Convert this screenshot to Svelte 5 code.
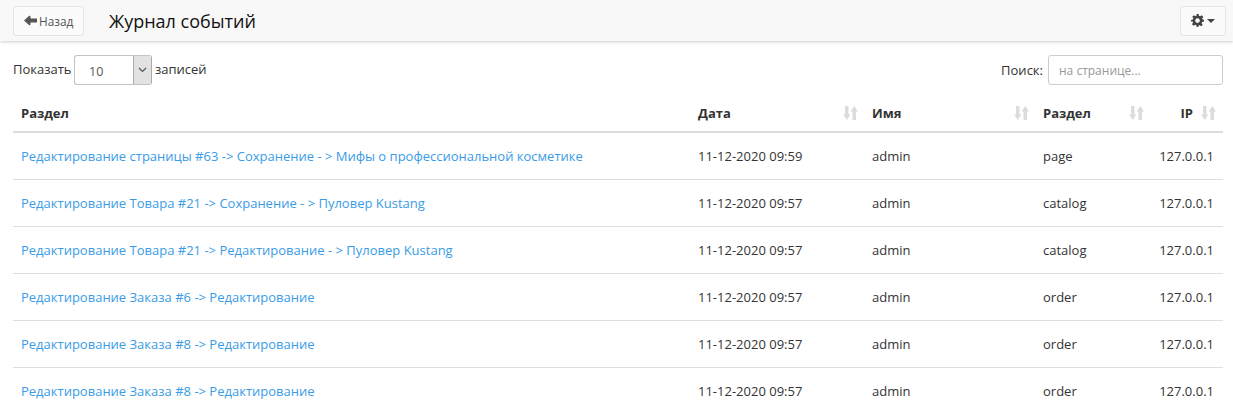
<script>
  const rows = [
    ['Редактирование страницы #63 -> Сохранение - > Мифы о профессиональной косметике', '11-12-2020 09:59', 'admin', 'page', '127.0.0.1'],
    ['Редактирование Товара #21 -> Сохранение - > Пуловер Kustang', '11-12-2020 09:57', 'admin', 'catalog', '127.0.0.1'],
    ['Редактирование Товара #21 -> Редактирование - > Пуловер Kustang', '11-12-2020 09:57', 'admin', 'catalog', '127.0.0.1'],
    ['Редактирование Заказа #6 -> Редактирование', '11-12-2020 09:57', 'admin', 'order', '127.0.0.1'],
    ['Редактирование Заказа #8 -> Редактирование', '11-12-2020 09:57', 'admin', 'order', '127.0.0.1'],
    ['Редактирование Заказа #8 -> Редактирование', '11-12-2020 09:57', 'admin', 'order', '127.0.0.1']
  ];
  const heads = [
    { t: 'Раздел', sort: false, c: 'c1' },
    { t: 'Дата', sort: true, c: 'c2' },
    { t: 'Имя', sort: true, c: 'c3' },
    { t: 'Раздел', sort: true, c: 'c4' },
    { t: 'IP', sort: true, c: 'c5' }
  ];
</script>

<div class="page">
  <header class="topbar">
    <button class="btn back">
      <svg class="arrow" width="13" height="11" viewBox="0 0 13 11"><path d="M0 5.500 5.500 0.500 6.500 1.500V3.600H13V7.400H6.500V9.500L5.500 10.500Z" fill="#555"/></svg>
      <span>Назад</span>
    </button>
    <h1>Журнал событий</h1>
    <button class="btn gear">
      <svg width="13" height="13" viewBox="0 0 24 24"><path fill-rule="evenodd" d="M10 0h4l.7 3.400 2.200.9L19.800 2.400l2.800 2.800-1.900 2.900.9 2.200L24 11v3l-3.400.7-.9 2.200 1.900 2.900-2.800 2.800-2.900-1.900-2.200.9L13.500 24h-3l-.7-3.400-2.200-.9-2.900 1.900-2.800-2.800 1.900-2.900-.9-2.200L0 14v-3l3.400-.7.9-2.200L2.400 5.200 5.200 2.400l2.900 1.900 2.200-.9ZM12 8a4.300 4.300 0 1 0 .01 0Z" fill="#444"/></svg>
      <span class="caret"></span>
    </button>
  </header>

  <div class="controls">
    <div class="length">
      <span class="label show">Показать</span>
      <div class="select"><span class="val">10</span><span class="drop"><svg width="9" height="6" viewBox="0 0 9 6"><path d="M1 1 4.500 4.500 8 1" fill="none" stroke="#555" stroke-width="1.200"/></svg></span></div>
      <span class="label">записей</span>
    </div>
    <div class="search">
      <span class="label">Поиск:</span>
      <input placeholder="на странице..." />
    </div>
  </div>

  <table>
    <colgroup>
      <col class="w1" /><col class="w2" /><col class="w3" /><col class="w4" /><col class="w5" />
    </colgroup>
    <thead>
      <tr>
        {#each heads as h}
          <th class={h.c}>
            {h.t}
            {#if h.sort}
              <svg class="sort" width="15" height="14" viewBox="0 0 15 14"><path d="M2 0H5.500V8.500H7.500L3.750 14 0 8.500H2Z" fill="#dcdcdc"/><path d="M9.500 14H13V5.500H15L11.250 0 7.500 5.500H9.500Z" fill="#dcdcdc"/></svg>
            {/if}
          </th>
        {/each}
      </tr>
    </thead>
    <tbody>
      {#each rows as r}
        <tr>
          <td><a href="#top">{r[0]}</a></td>
          <td>{r[1]}</td>
          <td>{r[2]}</td>
          <td>{r[3]}</td>
          <td class="right">{r[4]}</td>
        </tr>
      {/each}
    </tbody>
  </table>
</div>

<style>
  :global(body) { margin: 0; background: #fff; }
  .page {
    height: 415px;
    overflow: hidden;
    font-family: "Open Sans", sans-serif;
    font-size: 13px;
    color: #333;
  }
  .topbar {
    height: 41px;
    background: #f8f8f8;
    box-shadow: 0 1px 3px rgba(0,0,0,.2);
    display: flex;
    align-items: center;
    padding: 0 7px 0 13px;
    box-sizing: border-box;
  }
  .btn {
    height: 30px;
    box-sizing: border-box;
    background: #fbfbfb;
    border: 1px solid #e4e4e4;
    border-radius: 3px;
    display: flex;
    align-items: center;
    font-family: inherit;
    font-size: 11.800px;
    color: #555;
    padding: 0;
  }
  .back { width: 71px; padding-left: 10px; gap: 2px; }
  .gear { width: 46px; margin-left: auto; padding-left: 10px; gap: 3px; }
  .caret {
    width: 0; height: 0;
    border-left: 4px solid transparent;
    border-right: 4px solid transparent;
    border-top: 4px solid #444;
  }
  h1 {
    margin: 0 0 0 25px;
    font-size: 18px;
    font-weight: 400;
    color: #111;
  }
  .controls {
    display: flex;
    justify-content: space-between;
    align-items: center;
    margin: 14px 10px 0 13px;
    height: 30px;
  }
  .length { display: flex; align-items: center; gap: 3px; }
  .label { padding-bottom: 2px; }
  .show { width: 58px; white-space: nowrap; }
  .select {
    width: 78px;
    height: 30px;
    box-sizing: border-box;
    border: 1px solid #c4c4c4;
    border-right-color: #aaa;
    border-radius: 3px;
    display: flex;
    justify-content: space-between;
    background: #fff;
  }
  .val { padding-left: 14px; line-height: 29px; position: relative; top: 1px; color: #555; font-size: 12.500px; }
  .drop {
    width: 17px;
    background: #e2e2e2;
    border-left: 1px solid #aaa;
    display: flex;
    align-items: center;
    justify-content: center;
  }
  .search { display: flex; align-items: center; gap: 5px; }
  .search .label { padding-bottom: 0; }
  input {
    width: 175px;
    height: 30px;
    box-sizing: border-box;
    border: 1px solid #ccc;
    border-radius: 3px;
    padding: 0 10px;
    font-family: inherit;
    font-size: 12px;
    outline: none;
  }
  input::placeholder { color: #999; opacity: 1; }
  table {
    width: 1210px;
    margin: 10px 0 0 13px;
    border-collapse: collapse;
    table-layout: fixed;
  }
  .w1 { width: 677px; }
  .w2 { width: 174px; }
  .w3 { width: 171px; }
  .w4 { width: 115px; }
  .w5 { width: 73px; }
  th {
    height: 37px;
    padding: 0 8px;
    text-align: left;
    font-weight: 700;
    position: relative;
    border-bottom: 2px solid #ddd;
    box-sizing: border-box;
    color: #333;
  }
  th.c5 { text-align: right; padding-right: 30px; }
  .sort { position: absolute; right: 6px; top: 11px; }
  th.c5 .sort { right: 7px; }
  td {
    height: 47px;
    padding: 0 8px;
    border-bottom: 1px solid #ddd;
    box-sizing: border-box;
    white-space: nowrap;
  }
  tbody tr:last-child td { border-bottom: 0; }
  td.right { text-align: right; padding-right: 9px; }
  a { color: #3a9ce6; text-decoration: none; }
</style>
